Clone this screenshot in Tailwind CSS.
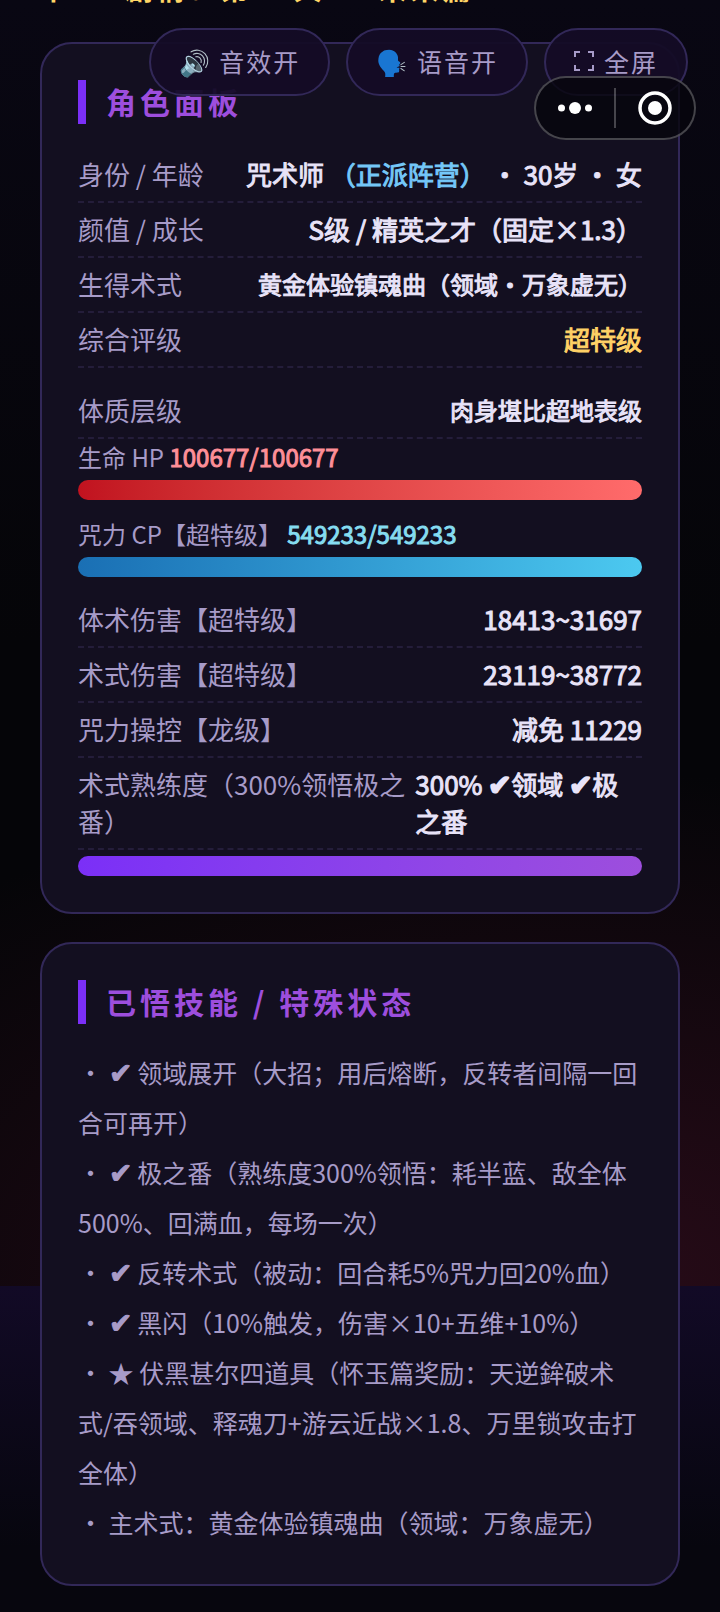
<!DOCTYPE html>
<html lang="zh-CN">
  <head>
    <meta charset="UTF-8" />
    <meta name="viewport" content="width=device-width, initial-scale=1.0" />
    <title>角色面板</title>
    <script src="https://cdn.jsdelivr.net/npm/@tailwindcss/browser@4"></script>
  </head>
  <body class="relative overflow-x-hidden bg-[#050508] font-['Noto_Sans_CJK_SC','Noto_Sans',sans-serif] text-[26px] leading-[37px] text-[#a79bc8]">
    <!-- page glow -->
    <div class="absolute inset-0 -z-10 flex flex-col">
      <div class="h-[1286px] bg-[radial-gradient(130%_40%_at_80%_100%,#280b18_0%,transparent_100%),linear-gradient(to_bottom,#090713,#050508_50%)]"></div>
      <div class="flex-1 bg-linear-to-b from-[#120a26] to-[#07060e] to-80%"></div>
    </div>

    <!-- floating toggles -->
    <div class="absolute top-7 right-8 z-10 flex gap-4 text-[25px] tracking-[2px]">
      <button class="flex h-[68px] items-center rounded-full border-2 border-[#322858] bg-[#140c26]/95 px-7 pb-0.5 whitespace-pre">🔊 音效开</button>
      <button class="flex h-[68px] items-center rounded-full border-2 border-[#322858] bg-[#140c26]/95 px-7 pb-0.5 whitespace-pre">🗣️ 语音开</button>
      <button class="flex h-[68px] items-center gap-2.5 rounded-full border-2 border-[#322858] bg-[#140c26]/95 px-7 pb-0.5">
        <svg class="h-5 w-5" viewBox="0 0 20 20" fill="none" stroke="currentColor" stroke-width="2"><path d="M1 6V1h5M14 1h5v5M19 14v5h-5M6 19H1v-5" /></svg>
        全屏
      </button>
    </div>

    <!-- app capsule -->
    <div class="absolute top-[76px] right-6 z-20 flex h-16 w-[162px] items-center rounded-full border-2 border-white/25 bg-[#06050c]/80 text-white">
      <button class="flex flex-1 justify-center" aria-label="更多">
        <svg class="h-3 w-9" viewBox="0 0 36 12" fill="currentColor"><circle cx="4.500" cy="6" r="3.500" /><circle cx="18" cy="6" r="6" /><circle cx="31.500" cy="6" r="3.500" /></svg>
      </button>
      <span class="h-10 w-0.5 bg-white/25"></span>
      <button class="flex flex-1 justify-center" aria-label="关闭">
        <svg class="h-[34px] w-[34px]" viewBox="0 0 34 34"><circle cx="17" cy="17" r="15" fill="none" stroke="currentColor" stroke-width="3.500" /><circle cx="17" cy="17" r="7" fill="currentColor" /></svg>
      </button>
    </div>

    <div class="h-[42px] overflow-hidden">
      <div class="-mt-[30px] px-10 text-[28px] font-bold tracking-[4px] text-[#ffd666]">卡 · 剧情：第30天 · 未来篇</div>
    </div>

    <main class="flex flex-col gap-7 px-10 pb-[26px]">
      <section class="rounded-[32px] border-2 border-[#322858] bg-[#130f20] p-9">
        <h2 class="mb-6 border-l-8 border-[#7b2ff7] pb-0.5 pl-5 text-[30px] leading-[42px] font-bold tracking-[4px] text-[#9d4edd]">角色面板</h2>

        <div class="flex justify-between border-b-2 border-dashed border-[#241d3a] pt-[7px] pb-[9px]">
          <span>身份 / 年龄</span>
          <span class="text-[#e8e3f8] [-webkit-text-stroke:1px]">咒术师 <span class="text-[#74c7f8]">（正派阵营）</span> ・ 30岁 ・ 女</span>
        </div>
        <div class="flex justify-between border-b-2 border-dashed border-[#241d3a] pt-[7px] pb-[9px]">
          <span>颜值 / 成长</span>
          <span class="text-[#e8e3f8] [-webkit-text-stroke:1px]">S级 / 精英之才（固定×1.3）</span>
        </div>
        <div class="flex justify-between border-b-2 border-dashed border-[#241d3a] pt-[7px] pb-[9px]">
          <span>生得术式</span>
          <span class="text-2xl leading-[37px] text-[#e8e3f8] [-webkit-text-stroke:1px]">黄金体验镇魂曲（领域・万象虚无）</span>
        </div>
        <div class="flex justify-between border-b-2 border-dashed border-[#241d3a] pt-[7px] pb-[9px]">
          <span>综合评级</span>
          <span class="text-[#ffd166] [-webkit-text-stroke:1px]">超特级</span>
        </div>
        <div class="mt-4 flex justify-between border-b-2 border-dashed border-[#241d3a] pt-[7px] pb-[9px]">
          <span>体质层级</span>
          <span class="text-2xl leading-[37px] text-[#e8e3f8] [-webkit-text-stroke:1px]">肉身堪比超地表级</span>
        </div>

        <div class="mb-4">
          <div class="mb-1.5 text-2xl leading-[35px]">生命 HP <span class="text-[#ff8f98] [-webkit-text-stroke:1px]">100677/100677</span></div>
          <div class="h-5 rounded-full bg-linear-to-r from-[#c1121f] to-[#ff6b6b]"></div>
        </div>
        <div class="mb-4">
          <div class="mb-1.5 text-2xl leading-[35px]">咒力 CP【超特级】 <span class="text-[#85dcf0] [-webkit-text-stroke:1px]">549233/549233</span></div>
          <div class="h-5 rounded-full bg-linear-to-r from-[#1a6fb4] to-[#4cc9f0]"></div>
        </div>

        <div class="flex justify-between border-b-2 border-dashed border-[#241d3a] pt-[7px] pb-[9px]">
          <span>体术伤害【超特级】</span>
          <span class="text-[#e8e3f8] [-webkit-text-stroke:1px]">18413~31697</span>
        </div>
        <div class="flex justify-between border-b-2 border-dashed border-[#241d3a] pt-[7px] pb-[9px]">
          <span>术式伤害【超特级】</span>
          <span class="text-[#e8e3f8] [-webkit-text-stroke:1px]">23119~38772</span>
        </div>
        <div class="flex justify-between border-b-2 border-dashed border-[#241d3a] pt-[7px] pb-[9px]">
          <span>咒力操控【龙级】</span>
          <span class="text-[#e8e3f8] [-webkit-text-stroke:1px]">减免 11229</span>
        </div>
        <div class="flex justify-between border-b-2 border-dashed border-[#241d3a] pt-[7px] pb-[9px]">
          <span>术式熟练度（300%领悟极之番）</span>
          <span class="text-[#e8e3f8] [-webkit-text-stroke:1px]">300% <span class="text-[28px] leading-none [-webkit-text-stroke:2px]">✔</span>领域 <span class="text-[28px] leading-none [-webkit-text-stroke:2px]">✔</span>极之番</span>
        </div>
        <div class="mt-1.5 h-5 rounded-full bg-linear-to-r from-[#7b2ff7] to-[#9d4edd]"></div>
      </section>

      <section class="rounded-[32px] border-2 border-[#322858] bg-[#130f20] p-9">
        <h2 class="mb-[23px] border-l-8 border-[#7b2ff7] pb-0.5 pl-5 text-[30px] leading-[42px] font-bold tracking-[4px] text-[#9d4edd]">已悟技能 / 特殊状态</h2>
        <ul class="pb-px text-[25px] leading-[50px]">
          <li>・ <span class="text-[28px] leading-none [-webkit-text-stroke:1px]">✔</span> 领域展开（大招；用后熔断，反转者间隔一回合可再开）</li>
          <li>・ <span class="text-[28px] leading-none [-webkit-text-stroke:1px]">✔</span> 极之番（熟练度300%领悟：耗半蓝、敌全体500%、回满血，每场一次）</li>
          <li>・ <span class="text-[28px] leading-none [-webkit-text-stroke:1px]">✔</span> 反转术式（被动：回合耗5%咒力回20%血）</li>
          <li>・ <span class="text-[28px] leading-none [-webkit-text-stroke:1px]">✔</span> 黑闪（10%触发，伤害×10+五维+10%）</li>
          <li>・ ★ 伏黑甚尔四道具（怀玉篇奖励：天逆鉾破术式/吞领域、释魂刀+游云近战×1.8、万里锁攻击打全体）</li>
          <li>・ 主术式：黄金体验镇魂曲（领域：万象虚无）</li>
        </ul>
      </section>
    </main>
  </body>
</html>
